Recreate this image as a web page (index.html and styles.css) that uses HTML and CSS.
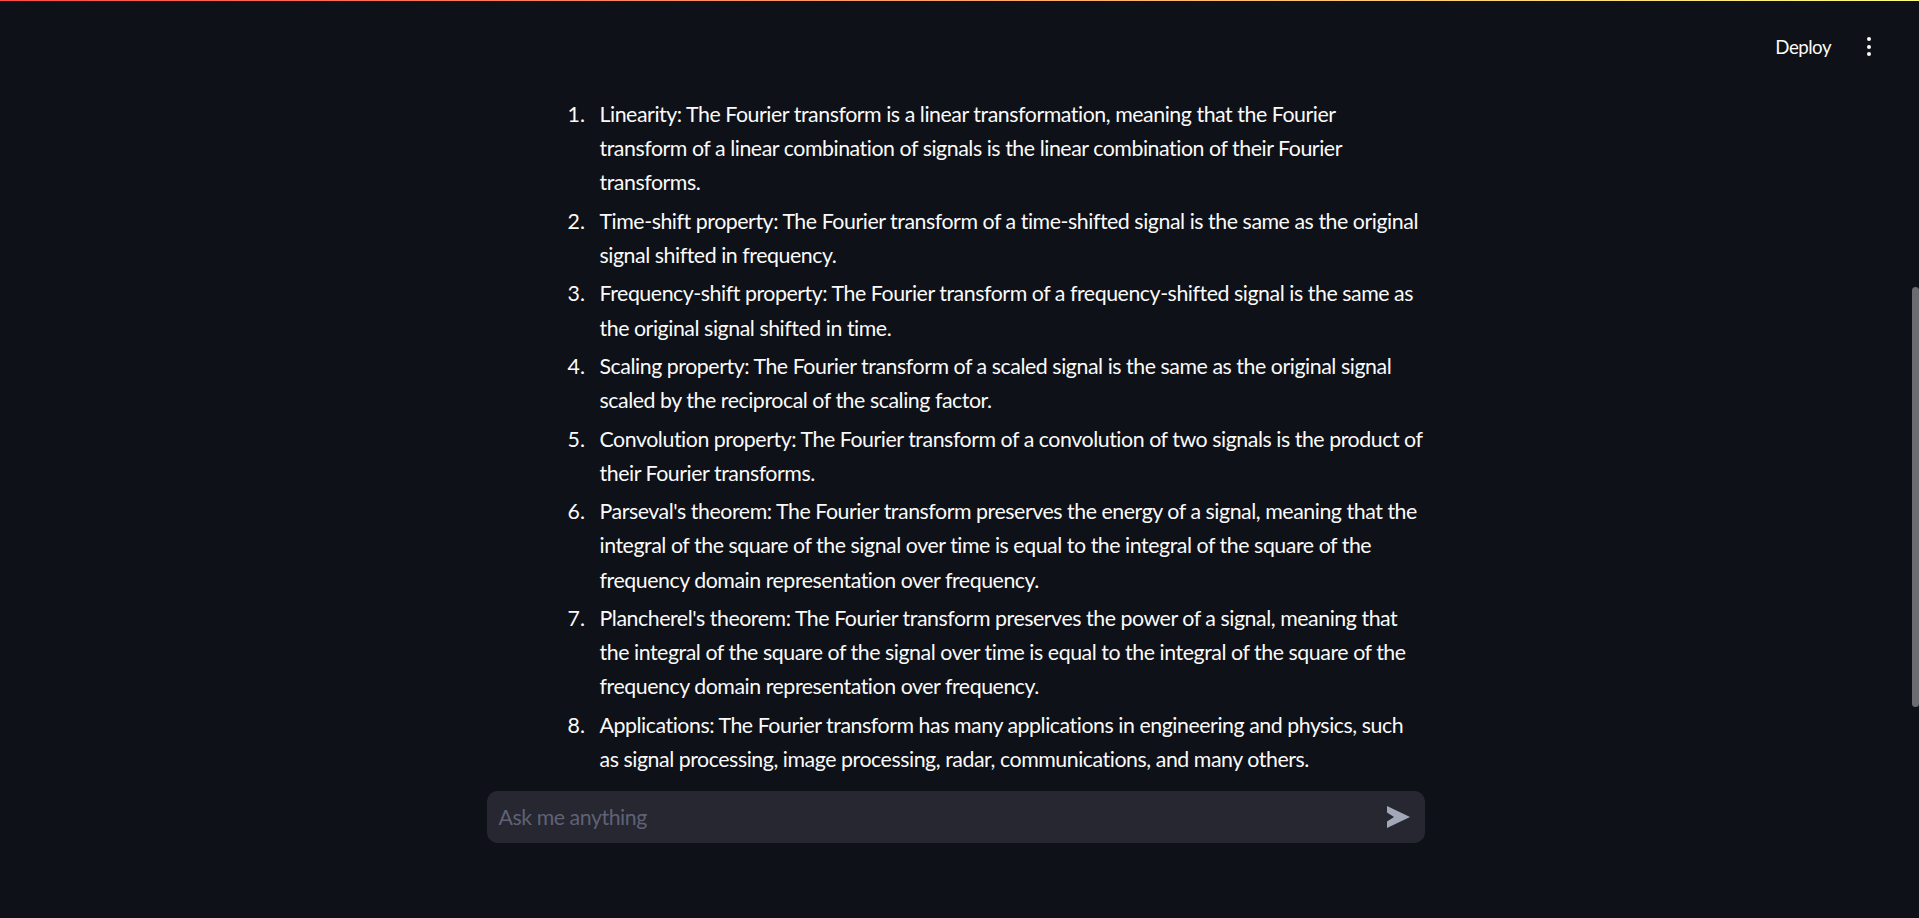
FILE: index.html
```html
<!DOCTYPE html>
<html lang="en">
<head>
<meta charset="utf-8">
<title>Chat</title>
<link rel="stylesheet" href="styles.css">
</head>
<body>
<div class="app">
  <div class="decoration"></div>
  <header class="toolbar">
    <button class="deploy">Deploy</button>
    <button class="menu" aria-label="Main menu">
      <span class="dot"></span><span class="dot"></span><span class="dot"></span>
    </button>
  </header>
  <main class="main">
    <div class="block">
      <ol class="answer">
        <li>Linearity: The Fourier transform is a linear transformation, meaning that the Fourier transform of a linear combination of signals is the linear combination of their Fourier transforms.</li>
        <li>Time-shift property: The Fourier transform of a time-shifted signal is the same as the original signal shifted in frequency.</li>
        <li>Frequency-shift property: The Fourier transform of a frequency-shifted signal is the same as the original signal shifted in time.</li>
        <li>Scaling property: The Fourier transform of a scaled signal is the same as the original signal scaled by the reciprocal of the scaling factor.</li>
        <li>Convolution property: The Fourier transform of a convolution of two signals is the product of their Fourier transforms.</li>
        <li>Parseval's theorem: The Fourier transform preserves the energy of a signal, meaning that the integral of the square of the signal over time is equal to the integral of the square of the frequency domain representation over frequency.</li>
        <li>Plancherel's theorem: The Fourier transform preserves the power of a signal, meaning that the integral of the square of the signal over time is equal to the integral of the square of the frequency domain representation over frequency.</li>
        <li>Applications: The Fourier transform has many applications in engineering and physics, such as signal processing, image processing, radar, communications, and many others.</li>
      </ol>
      <div class="chat-input">
        <span class="placeholder">Ask me anything</span>
        <svg class="send" width="23" height="22" viewBox="0 0 23 22" aria-hidden="true">
          <path d="M0 0 L23 11 L0 22 L0 15.5 L7 11 L0 6.5 Z" fill="#a3a8b8"/>
        </svg>
      </div>
    </div>
  </main>
  <div class="scrollbar"><div class="thumb"></div></div>
</div>
</body>
</html>
```

FILE: styles.css
```css
html, body {
  margin: 0;
  padding: 0;
  height: 100%;
  background: #0e1117;
  overflow: hidden;
}

.app {
  position: relative;
  height: 918px;
  font-family: Lato, "Noto Sans", sans-serif;
  color: #fafafa;
  letter-spacing: -0.45px;
}

.decoration {
  height: 1px;
  background: linear-gradient(90deg, #ff4b4b, #fffd80);
}

.toolbar {
  height: 91px;
  display: flex;
  justify-content: flex-end;
  align-items: center;
  padding-right: 38px;
  gap: 26px;
}

.deploy {
  background: none;
  border: none;
  color: #fafafa;
  font-family: inherit;
  font-size: 18.67px;
  letter-spacing: -0.5px;
  padding: 0;
}

.menu {
  width: 24px;
  height: 24px;
  background: none;
  border: none;
  padding: 0;
  display: flex;
  flex-direction: column;
  align-items: center;
  justify-content: center;
  gap: 3.5px;
}

.dot {
  width: 4px;
  height: 4px;
  border-radius: 50%;
  background: #fafafa;
}

.main {
  margin-right: 8px;
}

.block {
  width: 938px;
  margin: 0 auto;
  padding-top: 5px;
}

.answer {
  list-style: none;
  counter-reset: item;
  margin: 0 0 0 81px;
  padding: 0;
  font-size: 21.33px;
  line-height: 34.13px;
}

.answer li {
  counter-increment: item;
  display: flex;
  margin: 0 0 4.4px 0;
}

.answer li::before {
  content: counter(item) ".";
  flex: 0 0 32px;
  letter-spacing: 0;
}

.chat-input {
  margin-top: 14.5px;
  height: 52px;
  background: #262730;
  border-radius: 10.67px;
  display: flex;
  align-items: center;
  justify-content: space-between;
  padding: 0 15px 0 12px;
}

.placeholder {
  font-size: 21.33px;
  color: #5f6275;
}

.send {
  display: block;
}

.scrollbar {
  position: absolute;
  top: 0;
  right: 0;
  width: 8px;
  height: 918px;
}

.thumb {
  position: absolute;
  top: 287px;
  left: 1px;
  width: 7px;
  height: 420px;
  border-radius: 4px;
  background: #6b6c71;
}
```
